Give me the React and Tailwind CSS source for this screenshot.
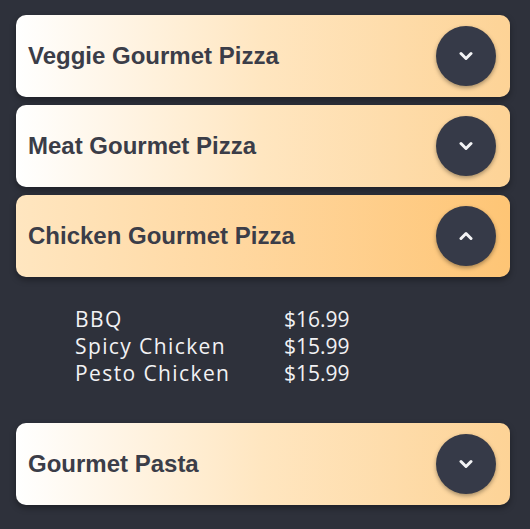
import React, { useState } from 'react';

const menu = [
  { name: 'Veggie Gourmet Pizza', items: [] },
  { name: 'Meat Gourmet Pizza', items: [] },
  {
    name: 'Chicken Gourmet Pizza',
    items: [
      ['BBQ', '$16.99'],
      ['Spicy Chicken', '$15.99'],
      ['Pesto Chicken', '$15.99'],
    ],
  },
  { name: 'Gourmet Pasta', items: [] },
];

function Chevron({ up }) {
  return (
    <svg width="14" height="10" viewBox="0 0 14 10" fill="none">
      <path
        d={up ? 'M2 7.5 L7 2.5 L12 7.5' : 'M2 2.5 L7 7.5 L12 2.5'}
        stroke="#f3f3f5"
        strokeWidth="3"
        strokeLinecap="round"
        strokeLinejoin="round"
      />
    </svg>
  );
}

export default function App() {
  const [open, setOpen] = useState(2);

  return (
    <div className="min-h-screen bg-[#2e313b] pl-4 pr-5 pt-[15px] flex flex-col gap-2">
      {menu.map((m, i) => {
        const isOpen = open === i;
        return (
          <div key={m.name}>
            <button
              onClick={() => setOpen(isOpen ? -1 : i)}
              className={`w-full h-[82px] rounded-[10px] pl-3 pr-[14px] flex items-center justify-between shadow-[0_3px_6px_rgba(0,0,0,0.35)] ${
                isOpen
                  ? 'bg-gradient-to-r from-[#ffe6c0] to-[#fec575]'
                  : 'bg-gradient-to-r from-white via-[#ffe6c0] to-[#fdd396]'
              }`}
            >
              <span className="font-['Liberation_Sans',Arial,sans-serif] font-bold text-[24px] text-[#3b3d48]">
                {m.name}
              </span>
              <span className="w-[60px] h-[60px] rounded-full bg-[#363a48] flex items-center justify-center shadow-[0_2px_4px_rgba(0,0,0,0.35)]">
                <Chevron up={isOpen} />
              </span>
            </button>
            {isOpen && m.items.length > 0 && (
              <div className="pt-[29px] pb-[28px] pl-[59px] font-['Open_Sans',sans-serif] text-[21px] leading-[27px] text-[#f2f2f4]">
                {m.items.map(([n, p]) => (
                  <div key={n} className="grid grid-cols-[209px_auto]">
                    <span className="tracking-[1.4px]">{n}</span>
                    <span>{p}</span>
                  </div>
                ))}
              </div>
            )}
          </div>
        );
      })}
    </div>
  );
}
